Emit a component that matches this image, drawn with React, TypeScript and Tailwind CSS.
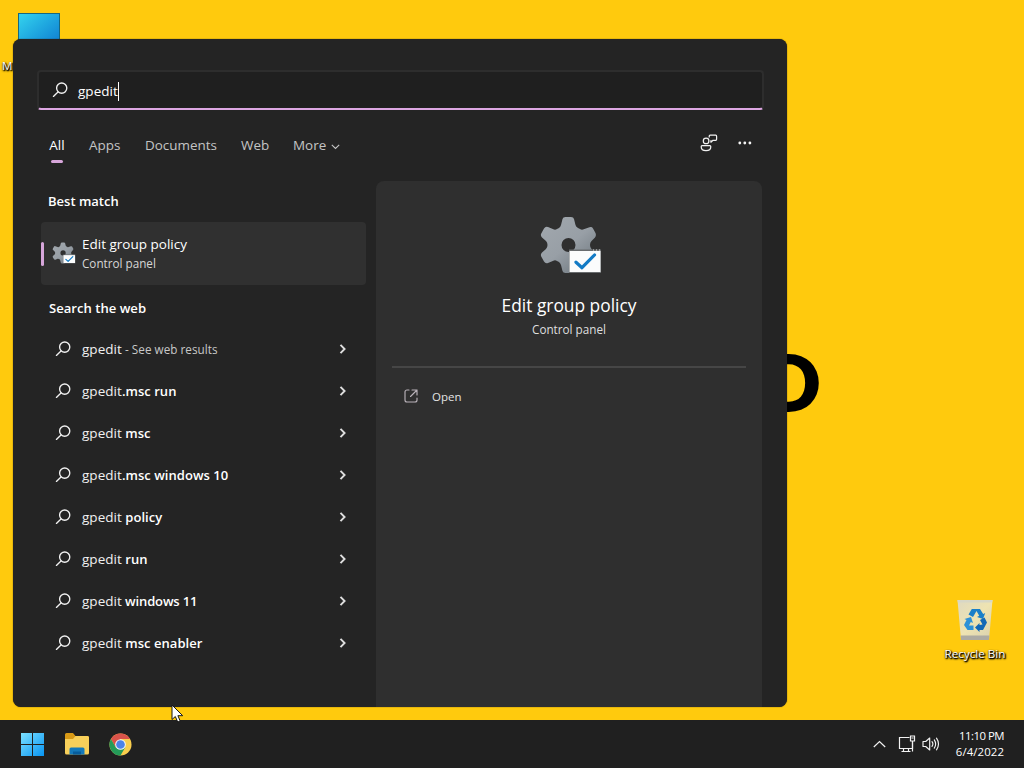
import React from 'react';

const results: { plain: string; bold?: string; note?: string; tight?: boolean }[] = [
  { plain: 'gpedit', note: ' - See web results' },
  { plain: 'gpedit', bold: '.msc run' },
  { plain: 'gpedit', bold: ' msc' },
  { plain: 'gpedit', bold: '.msc windows 10' },
  { plain: 'gpedit', bold: ' policy' },
  { plain: 'gpedit', bold: ' run' },
  { plain: 'gpedit', bold: ' windows 11', tight: true },
  { plain: 'gpedit', bold: ' msc enabler' },
];

function SearchIcon({ className = '' }: { className?: string }) {
  return (
    <svg className={className} width="16" height="16" viewBox="0 0 16 16" fill="none" stroke="#f0f0f0" strokeWidth="1.35" strokeLinecap="round">
      <circle cx="9.7" cy="6.1" r="5.1" />
      <path d="M6 9.9 1.4 14.4" />
    </svg>
  );
}

function ChevronRight() {
  return (
    <svg width="8" height="12" viewBox="0 0 8 12" fill="none" stroke="#dedede" strokeWidth="1.9">
      <path d="M1.5 1.8 5.6 6 1.5 10.200" />
    </svg>
  );
}

function PolicyIcon({ size, id }: { size: number; id: string }) {
  return (
    <svg width={size} height={size} viewBox="0 0 64 64">
      <defs>
        <linearGradient id={id} x1="0" y1="0" x2="0.8" y2="1">
          <stop offset="0" stopColor="#a2a8ae" />
          <stop offset="0.55" stopColor="#989fa6" />
          <stop offset="1" stopColor="#707980" />
        </linearGradient>
      </defs>
      <path
        fill={`url(#${id})`}
        fillRule="evenodd"
        d="M23.500 3Q24 1 26.500 1H32Q34.500 1 35 3L36.500 9Q37 11 39 12L41 13Q42.500 14 44 13.500L50.500 11.200Q53 10.500 54 12.500L56.500 17Q57.500 19.500 56 21.500L52.500 25Q51 26.500 51 29Q51 31.500 52.500 33L56 36.500Q57.500 38.500 56.500 41L54 45.500Q53 47.500 50.500 46.800L44 44.500Q42.500 44 41 45L39 46Q37 47 36.500 49L35 55Q34.500 57 32 57H26.500Q24 57 23.500 55L22 49Q21.500 47.500 20 46L18 45Q16.500 44 15 44.500L9 47Q6.500 48 5 45.500L2.500 41Q1 38.500 3 36.500L7 33Q8.500 31.500 8.500 29Q8.500 26.500 7 25L3 21.500Q1 19.500 2.500 17L5 12.500Q6.500 10 9 11L15 13.500Q16.500 14 18 13L20 12Q21.500 11 22 9ZM29.500 22A7 7 0 1 0 29.500 36A7 7 0 1 0 29.500 22Z"
      />
      <path d="M30 33.500H62V57H30Z" fill="#696c6e" />
      <path d="M30.500 35H61.500V56H30.500Z" fill="#fbfcfc" />
      <path d="M54 34h1m2 0h1m2 0h1" stroke="#d9d9d9" strokeWidth="1" />
      <path d="m37 46.200 6 5.500 12.500-12.700" fill="none" stroke="#137bc5" strokeWidth="3.200" strokeLinecap="round" strokeLinejoin="round" />
    </svg>
  );
}

function Results() {
  return (
    <div className="flex w-[353px] flex-col pt-[9px] pl-7">
      <h2 className="ml-[7px] h-[22px] text-[13px] leading-[22px] font-semibold text-white">Best match</h2>
      <div className="mt-[10px] flex h-[63px] w-[325px] items-center rounded-[4px] bg-[#303030]">
        <div className="h-6 w-[3px] rounded-full bg-[#d7a6da]" />
        <div className="ml-[8px] w-[23px]">
          <PolicyIcon size={24} id="gear-small" />
        </div>
        <div className="ml-[7px]">
          <div className="h-5 text-[13.500px] leading-5 whitespace-nowrap text-white">Edit group policy</div>
          <div className="h-5 text-[11.700px] leading-[19px] text-[#d7d7d7]">Control panel</div>
        </div>
      </div>
      <h2 className="mt-[12px] ml-2 h-[22px] text-[13.100px] leading-[22px] font-semibold text-white">Search the web</h2>
      <div className="mt-[9px] flex flex-col">
        {results.map((r, i) => (
          <div key={i} className="flex h-[42px] w-[325px] items-center pr-[19px] pl-[14px]">
            <SearchIcon />
            <div className="ml-[11px] flex h-[42px] flex-1 items-baseline text-[13.500px] leading-[43px] tracking-[0.04px] whitespace-pre text-[#f0f0f0]">
              {r.plain}
              {r.bold && (
                <span className={r.tight ? 'text-[13px] font-semibold tracking-[-0.15px] text-white' : 'text-[13px] font-semibold text-white'}>{r.bold}</span>
              )}
              {r.note && <span className="text-[11.700px] text-[#c8c8c8]">{r.note}</span>}
            </div>
            <ChevronRight />
          </div>
        ))}
      </div>
    </div>
  );
}

function Preview() {
  return (
    <div className="ml-[10px] flex w-[386px] flex-col rounded-t-lg bg-[#2f2f2f] px-4 pt-[35px]">
      <div className="flex flex-col items-center">
        <div className="pl-[4px]">
          <PolicyIcon size={64} id="gear-large" />
        </div>
        <div className="mt-[12px] h-7 text-[17.350px] leading-[27px] text-white">Edit group policy</div>
        <div className="h-5 text-[11.700px] leading-[19px] text-[#dfdfdf]">Control panel</div>
      </div>
      <div className="mt-[26px] h-[2px] bg-[#464646]" />
      <div className="mt-[19px] flex h-5 items-center pl-3">
        <svg className="-mt-[2px]" width="14" height="14" viewBox="0 0 14 14" fill="none" stroke="#b9b2b9" strokeWidth="1.15" strokeLinecap="round" strokeLinejoin="round">
          <path d="M5 1H3A2 2 0 0 0 1 3v8a2 2 0 0 0 2 2h8a2 2 0 0 0 2-2V9M8 1h5v5M13 1 6.500 7.500" />
        </svg>
        <span className="ml-[14px] text-[11.500px] text-[#e4e4e4]">Open</span>
      </div>
    </div>
  );
}

function SearchPanel() {
  return (
    <section className="absolute top-[39px] left-[13px] flex h-[668px] w-[774px] flex-col overflow-hidden rounded-lg bg-[#242424] pt-[31px] shadow-[0_0_1px_#111]">
      <div className="mr-[23px] ml-6 flex h-10 shrink-0 items-center rounded-[4px] border-2 border-[#2d2d2d] border-b-[#dda6e2] bg-[#1f1f1f] pl-[13px]">
        <SearchIcon />
        <span className="mt-[3px] ml-[10px] text-[13.500px] leading-[19px] tracking-[0.04px] text-white">gpedit</span>
        <span className="mt-[2px] h-[19px] w-px bg-white" />
      </div>
      <nav className="flex h-[71px] shrink-0 items-start pt-[24px] pr-[35px] pl-[36px] text-[13.450px] text-[#c4c4c4]">
        <div className="flex w-4 flex-col items-center text-white">
          <span className="h-[22px] leading-[22px]">All</span>
          <span className="mt-[4px] h-[3px] w-3 rounded-full bg-[#d7a6da]" />
        </div>
        <span className="ml-6 w-8 leading-[22px]">Apps</span>
        <span className="ml-6 w-[72px] leading-[22px]">Documents</span>
        <span className="ml-6 w-[29px] leading-[22px]">Web</span>
        <span className="ml-[23px] w-[34px] leading-[22px]">More</span>
        <svg className="mt-[10px] ml-[4px]" width="9" height="6" viewBox="0 0 9 6" fill="none" stroke="#c4c4c4" strokeWidth="1.1">
          <path d="m.8.8 3.700 3.700L8.200.8" />
        </svg>
        <svg className="ml-auto" width="18" height="18" viewBox="0 0 18 18" fill="none" stroke="#f1f1f1" strokeWidth="1.25" strokeLinejoin="round">
          <circle cx="6.100" cy="6.900" r="2.800" />
          <path d="M2 11.700H9.800Q10.800 11.700 10.800 12.700C10.800 15.400 8.800 16.600 6 16.600S1.200 15.400 1.200 12.700Q1.200 11.700 2 11.700ZM9.200 3.500V2.200Q9.200 1.200 10.200 1.200H15.700Q16.600 1.200 16.600 2.200V5.300Q16.600 6.300 15.700 6.300H13L10.900 8.200V6.300" />
        </svg>
        <svg className="mt-[7px] ml-[19px]" width="15" height="4" viewBox="0 0 15 4" fill="#f5f5f5">
          <circle cx="2.800" cy="2" r="1.400" /><circle cx="7.800" cy="2" r="1.400" /><circle cx="12.900" cy="2" r="1.400" />
        </svg>
      </nav>
      <div className="flex flex-1">
        <Results />
        <Preview />
      </div>
    </section>
  );
}

function RecycleBin() {
  return (
    <div className="absolute top-[598px] left-[935px] flex w-20 flex-col items-center">
      <svg width="38" height="44" viewBox="0 0 38 44">
        <defs>
          <linearGradient id="bin" x1="0" y1="0" x2="1" y2="1">
            <stop stopColor="#dfd9c0" /><stop offset=".5" stopColor="#eee3b2" /><stop offset="1" stopColor="#d9d0ae" />
          </linearGradient>
        </defs>
        <path d="M1.500 2H36.500L33 42H5Z" fill="url(#bin)" />
        <path d="M1.500 2H36.500L36.200 4.500H1.800Z" fill="#d8d7c6" />
        <path d="M4.600 37.500H33.400L33 42H5Z" fill="#aeaba2" />
        <g>
          <path fill="#197fc9" d="m12.500 16.500 3.300-5.500H24l3.200 5 2-1-2.200 6-6-2 2.200-1.200L20.500 13 17 19Z" />
          <path fill="#2d91d7" d="m8.500 21 6.500-2 2 6-2.200-1-1.800 3.500h4.500V32h-6L8 27l2.500-5Z" />
          <path fill="#1268b6" d="m24 22 4.500-2.500 2.500 5L27 32h-3.500v2L19 29.500l4.500-4.500v2l3-.5Z" />
        </g>
      </svg>
      <span className="mt-[3px] text-[11.650px] leading-[18px] whitespace-nowrap text-white [text-shadow:1px_1px_2px_#000,0_1px_2px_#000,1px_1px_1px_#000]">Recycle Bin</span>
    </div>
  );
}

function Taskbar() {
  return (
    <footer className="flex h-12 items-center bg-[#202020] pr-5 pl-[21px]">
      <svg width="23" height="23" viewBox="0 0 23 23">
        <defs>
          <linearGradient id="win" x1="0" y1="0" x2="23" y2="23" gradientUnits="userSpaceOnUse">
            <stop stopColor="#7ce1ff" /><stop offset="1" stopColor="#0794f3" />
          </linearGradient>
        </defs>
        <path fill="url(#win)" d="M0 0H11V11H0ZM12 0H23V11H12ZM0 12H11V23H0ZM12 12H23V23H12Z" />
      </svg>
      <svg className="ml-[21px]" width="24" height="22" viewBox="0 0 24 22">
        <path d="M0 1.500Q0 0 1.500 0H8L10.500 3H22.500Q24 3 24 4.500V12H0Z" fill="#d99a16" />
        <path d="M0 6H8L10.500 3H22.500Q24 3 24 4.500V20Q24 21.500 22.500 21.500H1.500Q0 21.500 0 20Z" fill="#f8d05a" />
        <path d="M4.500 16Q4.500 14.500 6 14.500H18Q19.500 14.500 19.500 16V21.500H4.500Z" fill="#1479ba" />
        <path d="M8 18.500H16V21.500H8Z" fill="#075c9b" />
      </svg>
      <svg className="ml-[20px]" width="23" height="23" viewBox="0 0 24 24">
        <circle cx="12" cy="12" r="11.500" fill="#f9ce4d" />
        <path d="M2.040 6.250A11.500 11.500 0 0 1 21.960 6.250H12L7 14.900Z" fill="#d9534a" />
        <path d="M2.040 6.250A11.500 11.500 0 0 0 12 23.500L17 14.900H7Z" fill="#249b59" />
        <circle cx="12" cy="12" r="5.600" fill="#f4f4f4" />
        <circle cx="12" cy="12" r="4.500" fill="#4c83e8" />
      </svg>
      <svg className="ml-auto" width="13" height="8" viewBox="0 0 13 8" fill="none" stroke="#f2f2f2" strokeWidth="1.200">
        <path d="m.8 7 5.700-5.500L12.200 7" />
      </svg>
      <svg className="ml-[12px]" width="18" height="18" viewBox="0 0 18 18" fill="none" stroke="#f2f2f2" strokeWidth="1.200">
        <path d="M11.500 2.500H1.500V13.500H14.500V6.500M5.500 13.500V16.500M10.500 13.500V16.500M3.500 16.500H12.500" />
        <path d="M12.500 1H16.500V6H12.500ZM13.500 3H15.500M14.500 6V16.500" />
      </svg>
      <svg className="ml-[6px]" width="18" height="16" viewBox="0 0 18 16" fill="none" stroke="#f2f2f2" strokeWidth="1.150" strokeLinejoin="round" strokeLinecap="round">
        <path d="M1 5.500H3.700L7.700 2V14L3.700 10.500H1ZM10 5.600Q11.800 8 10 10.400M12.300 3.900Q15 8 12.300 12.100M14.500 2.200Q18.500 8 14.500 13.800" />
      </svg>
      <div className="ml-[14px] flex w-[50px] flex-col items-end text-[11.400px] leading-4 whitespace-nowrap text-white">
        <span className="tracking-[-0.500px]">11:10 PM</span>
        <span className="tracking-[0.100px]">6/4/2022</span>
      </div>
    </footer>
  );
}

export default function App() {
  return (
    <main className="relative flex h-[768px] w-[1024px] flex-col overflow-hidden bg-[#ffca0d] font-['Open_Sans','Noto_Sans',sans-serif]">
      <div className="relative flex-1">
        <div className="absolute top-[13px] left-[18px] h-9 w-[42px] border border-[#16677f] bg-linear-to-br from-[#35d3ed] to-[#1178cf]" />
        <span className="absolute top-[57px] left-[2px] text-[11.650px] leading-[18px] text-white [text-shadow:1px_1px_2px_#000,0_1px_2px_#000,1px_1px_1px_#000]">M</span>
        <span className="absolute top-[334px] left-[761px] font-['Lato',sans-serif] text-[79px] leading-[95px] font-extrabold text-black">D</span>
        <SearchPanel />
        <RecycleBin />
      </div>
      <Taskbar />
      <svg className="absolute top-[704px] left-[171px]" width="13" height="19" viewBox="0 0 13 19">
        <path d="M1 1V15.500L4.300 12.500 6.700 18 9.200 17 6.900 11.700H11.700Z" fill="#fff" stroke="#171717" strokeWidth="1" />
      </svg>
    </main>
  );
}
